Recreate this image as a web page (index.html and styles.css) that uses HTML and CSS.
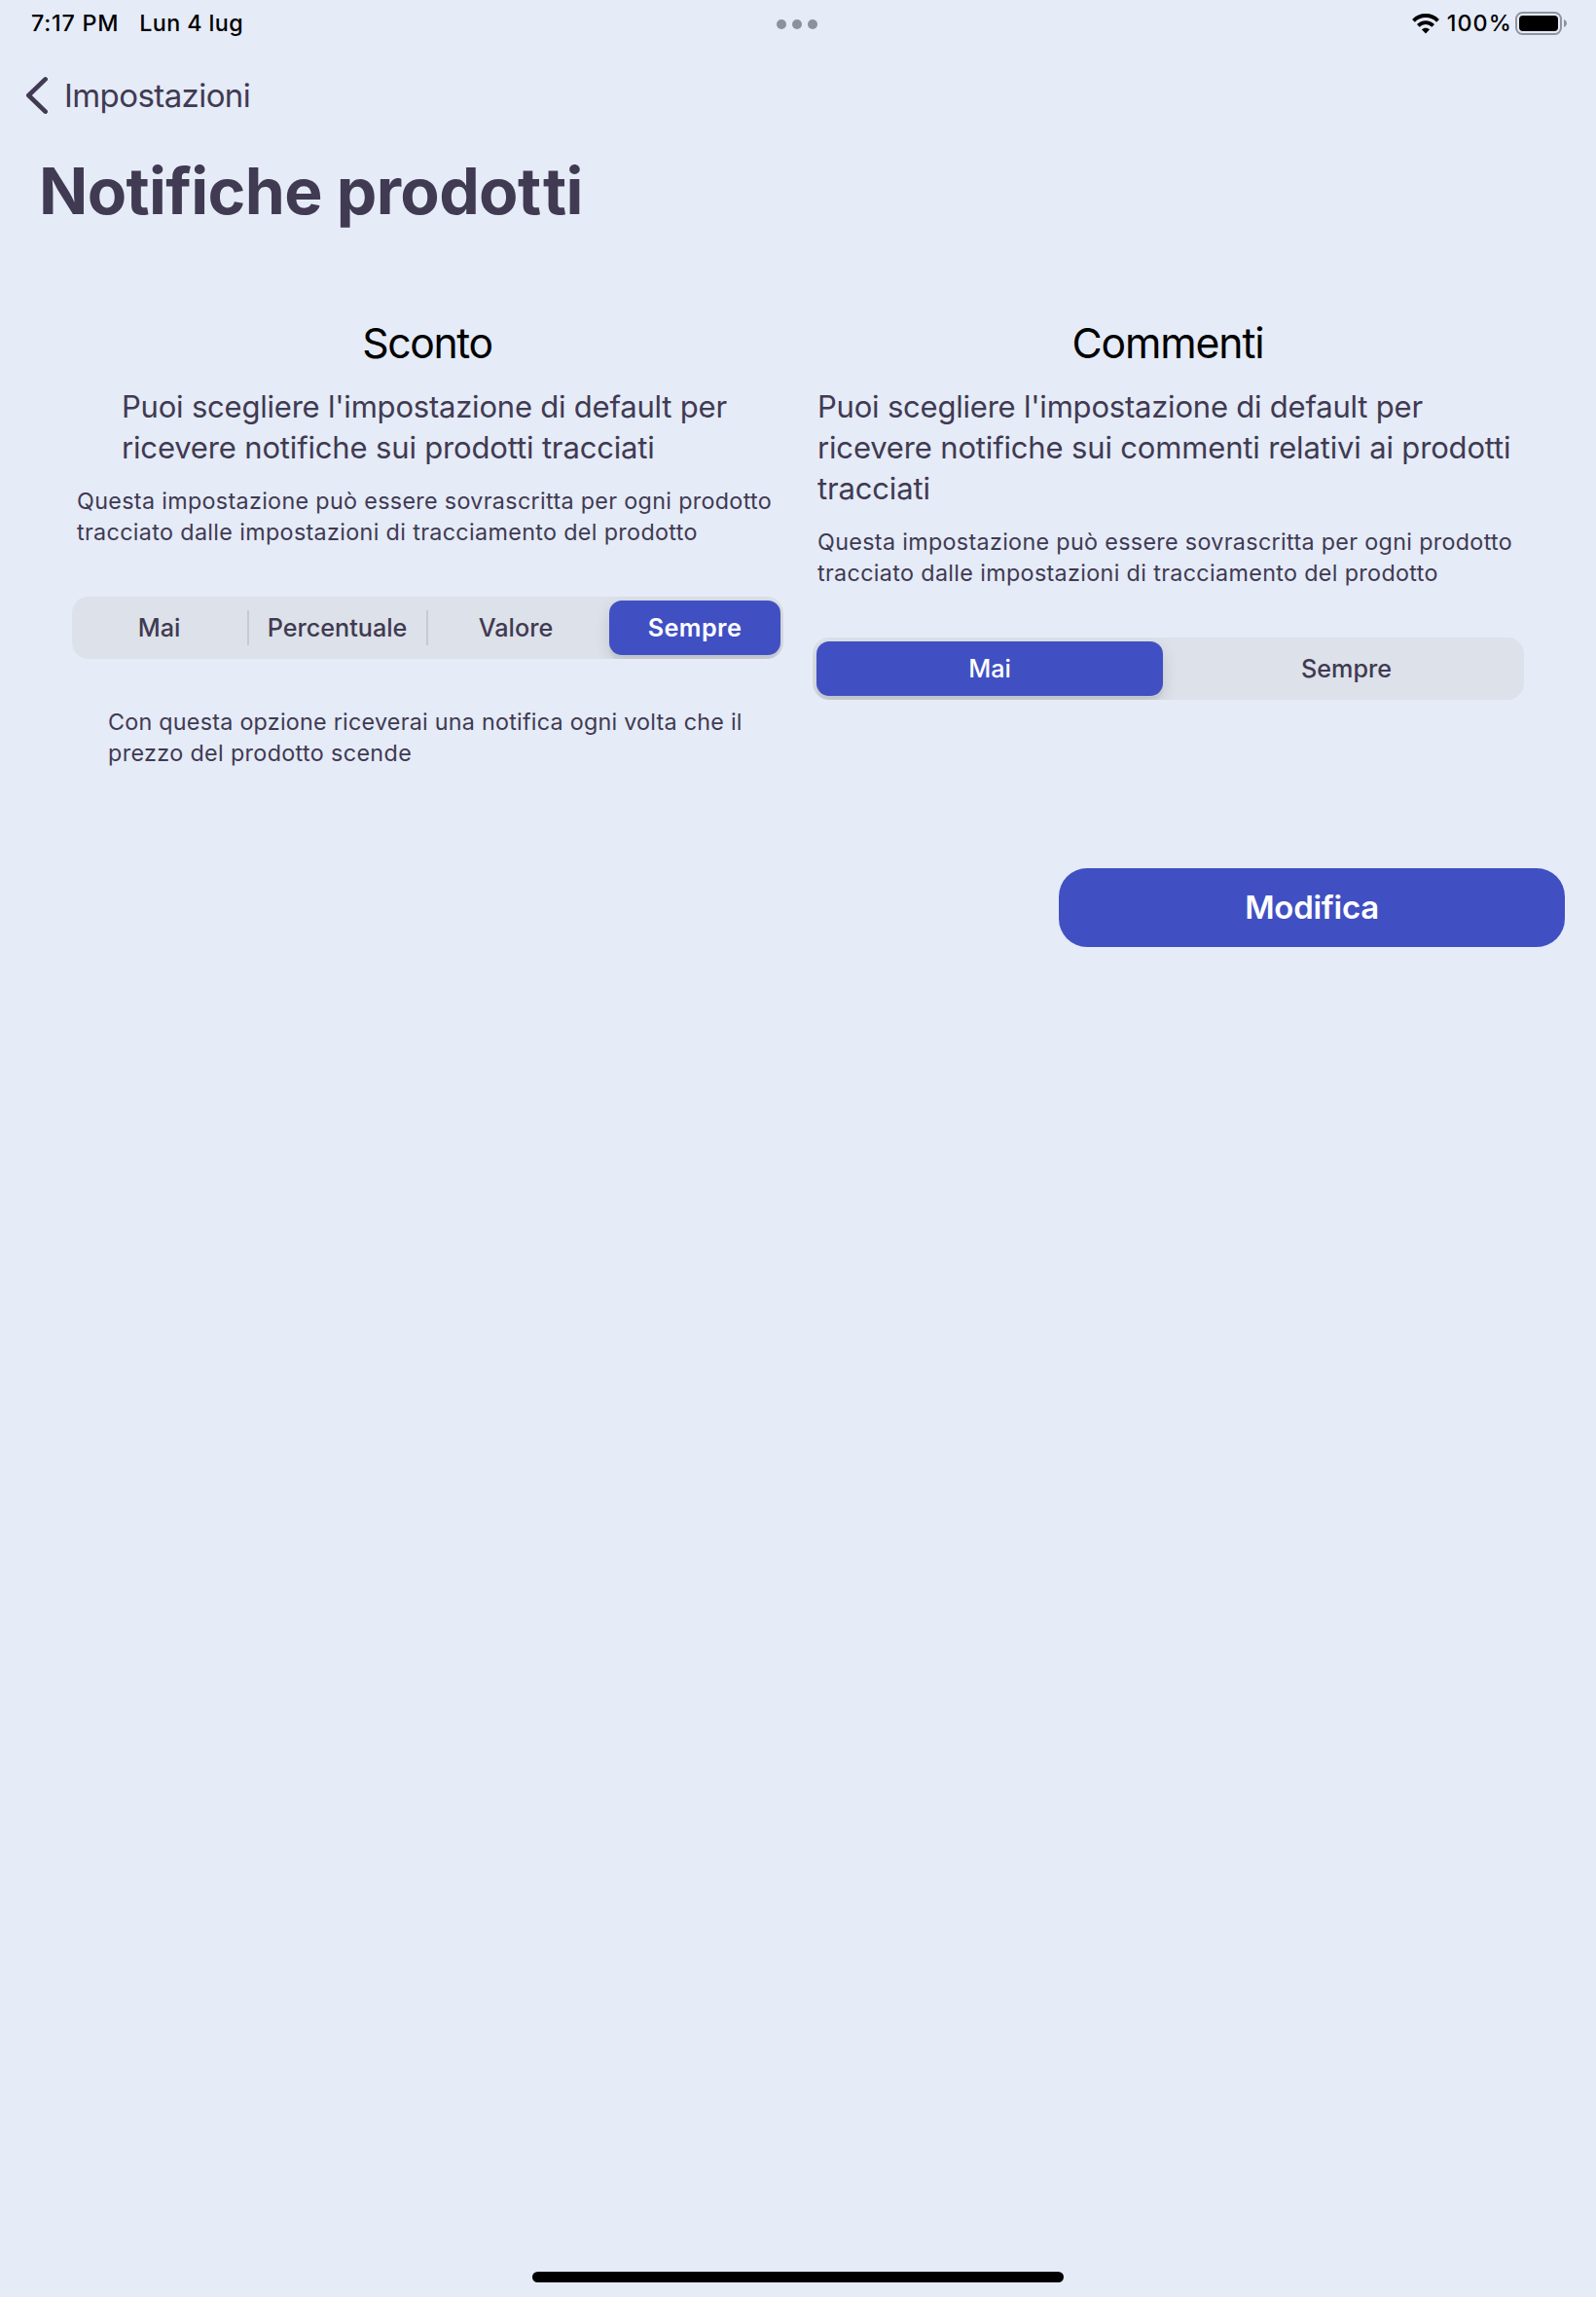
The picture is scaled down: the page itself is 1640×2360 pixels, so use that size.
FILE: index.html
```html
<!DOCTYPE html>
<html lang="it">
<head>
<meta charset="utf-8">
<title>Notifiche prodotti</title>
<link rel="stylesheet" href="styles.css">
</head>
<body>
<header class="status">
  <div class="status-left"><span class="time">7:17 PM</span><span class="date">Lun 4 lug</span></div>
  <div class="dots"><i></i><i></i><i></i></div>
  <div class="status-right">
    <svg class="wifi" width="28" height="21" viewBox="0 0 28 21" fill="none" stroke="#000" stroke-width="3.9">
      <path d="M1.5 7.3C8.300 .3 19.700 .3 26.500 7.300"/>
      <path d="M6.300 12.300C10.600 8 17.400 8 21.700 12.300"/>
      <path d="M14 20.400L9.900 16.300C12.100 14.200 15.900 14.200 18.100 16.300Z" fill="#000" stroke="none"/>
    </svg>
    <span class="percent">100%</span>
    <svg class="battery" width="54" height="24" viewBox="0 0 54 24">
      <rect x="1" y="1" width="46" height="22" rx="6.5" fill="none" stroke="#8f949f" stroke-width="2"/>
      <rect x="4" y="4" width="40" height="16" rx="4" fill="#000"/>
      <path d="M50 8c4 1.400 4 6.600 0 8z" fill="#8f949f"/>
    </svg>
  </div>
</header>
<nav class="back">
  <svg width="24" height="42" viewBox="0 0 24 42" fill="none" stroke="#403a52" stroke-width="4.7" stroke-linecap="round" stroke-linejoin="round"><path d="M21.600 4.400L4.400 21L21.600 37.600"/></svg>
  <span>Impostazioni</span>
</nav>
<h1 class="title">Notifiche prodo<span class="loose">t</span>ti</h1>
<main class="columns">
  <section class="column">
    <h2 class="heading heading-discount">Sconto</h2>
    <p class="intro intro-inset">Puoi scegliere l'impostazione di default per<br>ricevere notifiche sui prodotti tracciati</p>
    <p class="note">Questa impostazione può essere sovrascritta per ogni prodotto<br>tracciato dalle impostazioni di tracciamento del prodotto</p>
    <div class="segments segments-four">
      <span class="segment">Mai</span>
      <span class="segment divided">Percentuale</span>
      <span class="segment divided">Valore</span>
      <span class="segment selected bold">Sempre</span>
    </div>
    <p class="note note-option">Con questa opzione riceverai una notifica ogni volta che il<br>prezzo del prodotto scende</p>
  </section>
  <section class="column">
    <h2 class="heading">Commenti</h2>
    <p class="intro">Puoi scegliere l'impostazione di default per<br>ricevere notifiche sui commenti relativi ai prodotti<br>tracciati</p>
    <p class="note">Questa impostazione può essere sovrascritta per ogni prodotto<br>tracciato dalle impostazioni di tracciamento del prodotto</p>
    <div class="segments segments-two">
      <span class="segment selected">Mai</span>
      <span class="segment">Sempre</span>
    </div>
  </section>
</main>
<button class="edit">Modifica</button>
<div class="home"></div>
</body>
</html>
```
FILE: styles.css
```css
* { box-sizing: border-box; }
body {
  margin: 0;
  height: 2360px;
  display: flex;
  flex-direction: column;
  background: #e5ebf7;
  color: #403a52;
  font-family: Inter, "Liberation Sans", sans-serif;
  white-space: nowrap;
  overflow: hidden;
}
h1, h2, p { margin: 0; font-weight: 400; }

.status {
  display: grid;
  grid-template-columns: 1fr auto 1fr;
  height: 48px;
  padding: 0 29px 0 32px;
  color: #000;
  font-size: 23.3px;
  font-weight: 480;
  line-height: 48px;
}
.status-left { display: flex; gap: 21px; }
.time { letter-spacing: .75px; }
.date { letter-spacing: .4px; }
.dots { display: flex; gap: 6px; align-items: center; padding-top: 2px; margin: 0 3px 0 -3px; }
.dots i { width: 10px; height: 10px; border-radius: 50%; background: #8b919d; }
.status-right { display: flex; justify-content: flex-end; align-items: center; }
.wifi { margin-right: 8px; }
.percent { letter-spacing: 1.1px; margin-right: 3px; }

.back {
  display: flex;
  align-items: center;
  gap: 17px;
  height: 100px;
  padding-left: 25px;
  font-size: 33px;
  letter-spacing: -.58px;
}

.title {
  height: 96px;
  padding-left: 40px;
  font-size: 66px;
  font-weight: 700;
  line-height: 96px;
  letter-spacing: -.66px;
}
.loose { letter-spacing: 2px; }

.columns {
  display: grid;
  grid-template-columns: 731px 731px;
  gap: 30px;
  padding: 82px 0 0 74px;
}
.heading {
  color: #000;
  font-size: 42.7px;
  line-height: 53px;
  letter-spacing: -1.1px;
  text-align: center;
  padding-right: 1px;
}
.heading-discount { letter-spacing: -1.35px; }
.intro {
  margin: 18px 0 0 5px;
  font-size: 31px;
  line-height: 42px;
  letter-spacing: -.16px;
}
.intro::first-line { letter-spacing: -.21px; }
.intro-inset { margin-left: 51px; }
.note {
  margin: 18px 0 0 5px;
  font-size: 23.3px;
  line-height: 32px;
  letter-spacing: .355px;
}
.note::first-line { letter-spacing: .335px; }
.note-option { margin: 49px 0 0 37px; letter-spacing: .37px; }
.note-option::first-line { letter-spacing: .255px; }

.segments {
  display: grid;
  height: 64px;
  margin-top: 50px;
  padding: 4px 3px 4px 0;
  border-radius: 17px;
  background: #dde1e9;
  overflow: hidden;
  font-size: 25.2px;
  font-weight: 480;
}
.segments-four { grid-template-columns: 180px 184px 188px 176px; }
.segments-two { grid-template-columns: 356px 1fr; padding: 4px 0 4px 4px; }
.segment {
  position: relative;
  line-height: 56px;
  text-align: center;
}
.segments-four .segment:first-child { padding-right: 1px; }
.segment.divided:nth-child(2) { padding-left: 1px; }
.segment.divided:nth-child(3) { padding-right: 4px; }
.segments-two .segment:last-child { padding-left: 6px; }
.divided::before {
  content: "";
  position: absolute;
  left: 0;
  top: 10px;
  width: 2px;
  height: 36px;
  background: #c7cad3;
}
.selected {
  border-radius: 13px;
  background: #4050c3;
  color: #fff;
  box-shadow: 0 6px 16px rgba(0, 0, 0, .12), 0 6px 2px rgba(0, 0, 0, .04);
}
.bold { font-weight: 570; letter-spacing: .45px; }

.edit {
  align-self: flex-end;
  width: 520px;
  height: 81px;
  margin: 102px 32px 0 0;
  padding: 0;
  border: 0;
  border-radius: 29px;
  background: #4050c3;
  color: #fff;
  font: 570 33px/81px Inter, "Liberation Sans", sans-serif;
  letter-spacing: -.28px;
}
.home {
  align-self: center;
  width: 546px;
  height: 11px;
  margin: auto 0 15px;
  border-radius: 6px;
  background: #000;
}
```
